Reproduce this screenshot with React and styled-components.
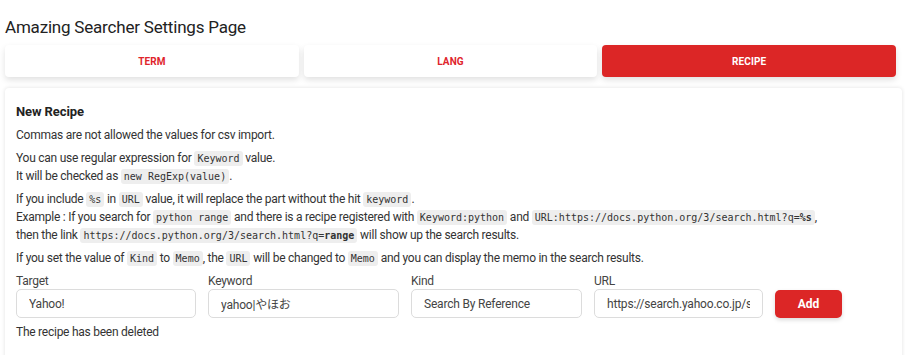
import React, { useState } from "react";
import styled, { createGlobalStyle, css } from "styled-components";

const GlobalStyle = createGlobalStyle`
  body {
    margin: 0;
    background: #fff;
    font-family: Roboto, "Noto Sans CJK JP", sans-serif;
    color: #333;
  }
`;

const Page = styled.div`
  padding: 15px 3px 0 5px;
`;

const Title = styled.h1`
  margin: 0 0 6px;
  font-size: 17px;
  letter-spacing: -0.2px;
  line-height: 24px;
  font-weight: 400;
  color: #222;
`;

const TabBar = styled.div`
  display: flex;
  gap: 5px;
  width: 891px;
`;

const Tab = styled.button`
  flex: 1;
  height: 32px;
  border: none;
  border-radius: 4px;
  background: #fff;
  color: #e0242c;
  font-family: inherit;
  font-size: 10px;
  font-weight: 700;
  letter-spacing: 0.1px;
  box-shadow: 0 3px 6px rgba(0, 0, 0, 0.12);
  cursor: pointer;
  ${(p) =>
    p.active &&
    css`
      background: #dc2626;
      color: #fff;
    `}
`;

const Panel = styled.section`
  margin-top: 11px;
  padding: 15px 11px 20px;
  background: #fff;
  border-radius: 4px;
  box-shadow: 0 0 4px rgba(0, 0, 0, 0.12);
  font-size: 12px;
  letter-spacing: -0.25px;
  line-height: 18px;
`;

const Heading = styled.h2`
  margin: 0 0 5px;
  font-size: 13px;
  letter-spacing: -0.1px;
  line-height: 18px;
  font-weight: 700;
  color: #222;
`;

const Para = styled.p`
  margin: 0 0 5px;
`;

const Code = styled.code`
  font-family: "DejaVu Sans Mono", monospace;
  font-size: 10px;
  line-height: 1;
  letter-spacing: 0;
  background: #eeeeee;
  border-radius: 3px;
  padding: 2px 3px;
`;

const Form = styled.div`
  display: flex;
  align-items: flex-end;
  gap: 12px;
  margin-top: 6px;
`;

const Field = styled.label`
  display: flex;
  flex-direction: column;
  width: ${(p) => p.width}px;
  color: #444;
  line-height: 16px;
`;

const Input = styled.input`
  box-sizing: border-box;
  height: 29px;
  width: 100%;
  padding: 0 12px;
  border: 1px solid #dcdcdc;
  border-radius: 5px;
  font-family: inherit;
  font-size: 12px;
  letter-spacing: -0.2px;
  color: #444;
  outline: none;
`;

const AddButton = styled.button`
  width: 67px;
  height: 28px;
  border: none;
  border-radius: 5px;
  background: #dc2626;
  color: #fff;
  font-family: inherit;
  font-size: 12px;
  font-weight: 700;
  box-shadow: 0 2px 4px rgba(0, 0, 0, 0.15);
  cursor: pointer;
`;

const Status = styled.p`
  margin: 5px 0 0;
`;

const tabs = ["TERM", "LANG", "RECIPE"];

export default function App() {
  const [tab, setTab] = useState("RECIPE");
  const [form, setForm] = useState({
    target: "Yahoo!",
    keyword: "yahoo|やほお",
    kind: "Search By Reference",
    url: "https://search.yahoo.co.jp/search?p=%s",
  });
  const set = (k) => (e) => setForm({ ...form, [k]: e.target.value });

  return (
    <Page>
      <GlobalStyle />
      <Title>Amazing Searcher Settings Page</Title>
      <TabBar>
        {tabs.map((t) => (
          <Tab key={t} active={tab === t} onClick={() => setTab(t)}>
            {t}
          </Tab>
        ))}
      </TabBar>
      <Panel>
        <Heading>New Recipe</Heading>
        <Para>Commas are not allowed the values for csv import.</Para>
        <Para>
          You can use regular expression for <Code>Keyword</Code> value.
          <br />
          It will be checked as <Code>new RegExp(value)</Code>.
        </Para>
        <Para>
          If you include <Code>%s</Code> in <Code>URL</Code> value, it will replace the part without the hit{" "}
          <Code>keyword</Code>.
          <br />
          Example : If you search for <Code>python range</Code> and there is a recipe registered with{" "}
          <Code>Keyword:python</Code> and{" "}
          <Code>
            URL:https://docs.python.org/3/search.html?q=<b>%s</b>
          </Code>
          ,
          <br />
          then the link{" "}
          <Code>
            https://docs.python.org/3/search.html?q=<b>range</b>
          </Code>{" "}
          will show up the search results.
        </Para>
        <Para>
          If you set the value of <Code>Kind</Code> to <Code>Memo</Code>, the <Code>URL</Code> will be changed to{" "}
          <Code>Memo</Code> and you can display the memo in the search results.
        </Para>
        <Form>
          <Field width={180}>
            Target
            <Input value={form.target} onChange={set("target")} />
          </Field>
          <Field width={191}>
            Keyword
            <Input value={form.keyword} onChange={set("keyword")} />
          </Field>
          <Field width={171}>
            Kind
            <Input value={form.kind} onChange={set("kind")} />
          </Field>
          <Field width={169}>
            URL
            <Input value={form.url} onChange={set("url")} />
          </Field>
          <AddButton>Add</AddButton>
        </Form>
        <Status>The recipe has been deleted</Status>
      </Panel>
    </Page>
  );
}
